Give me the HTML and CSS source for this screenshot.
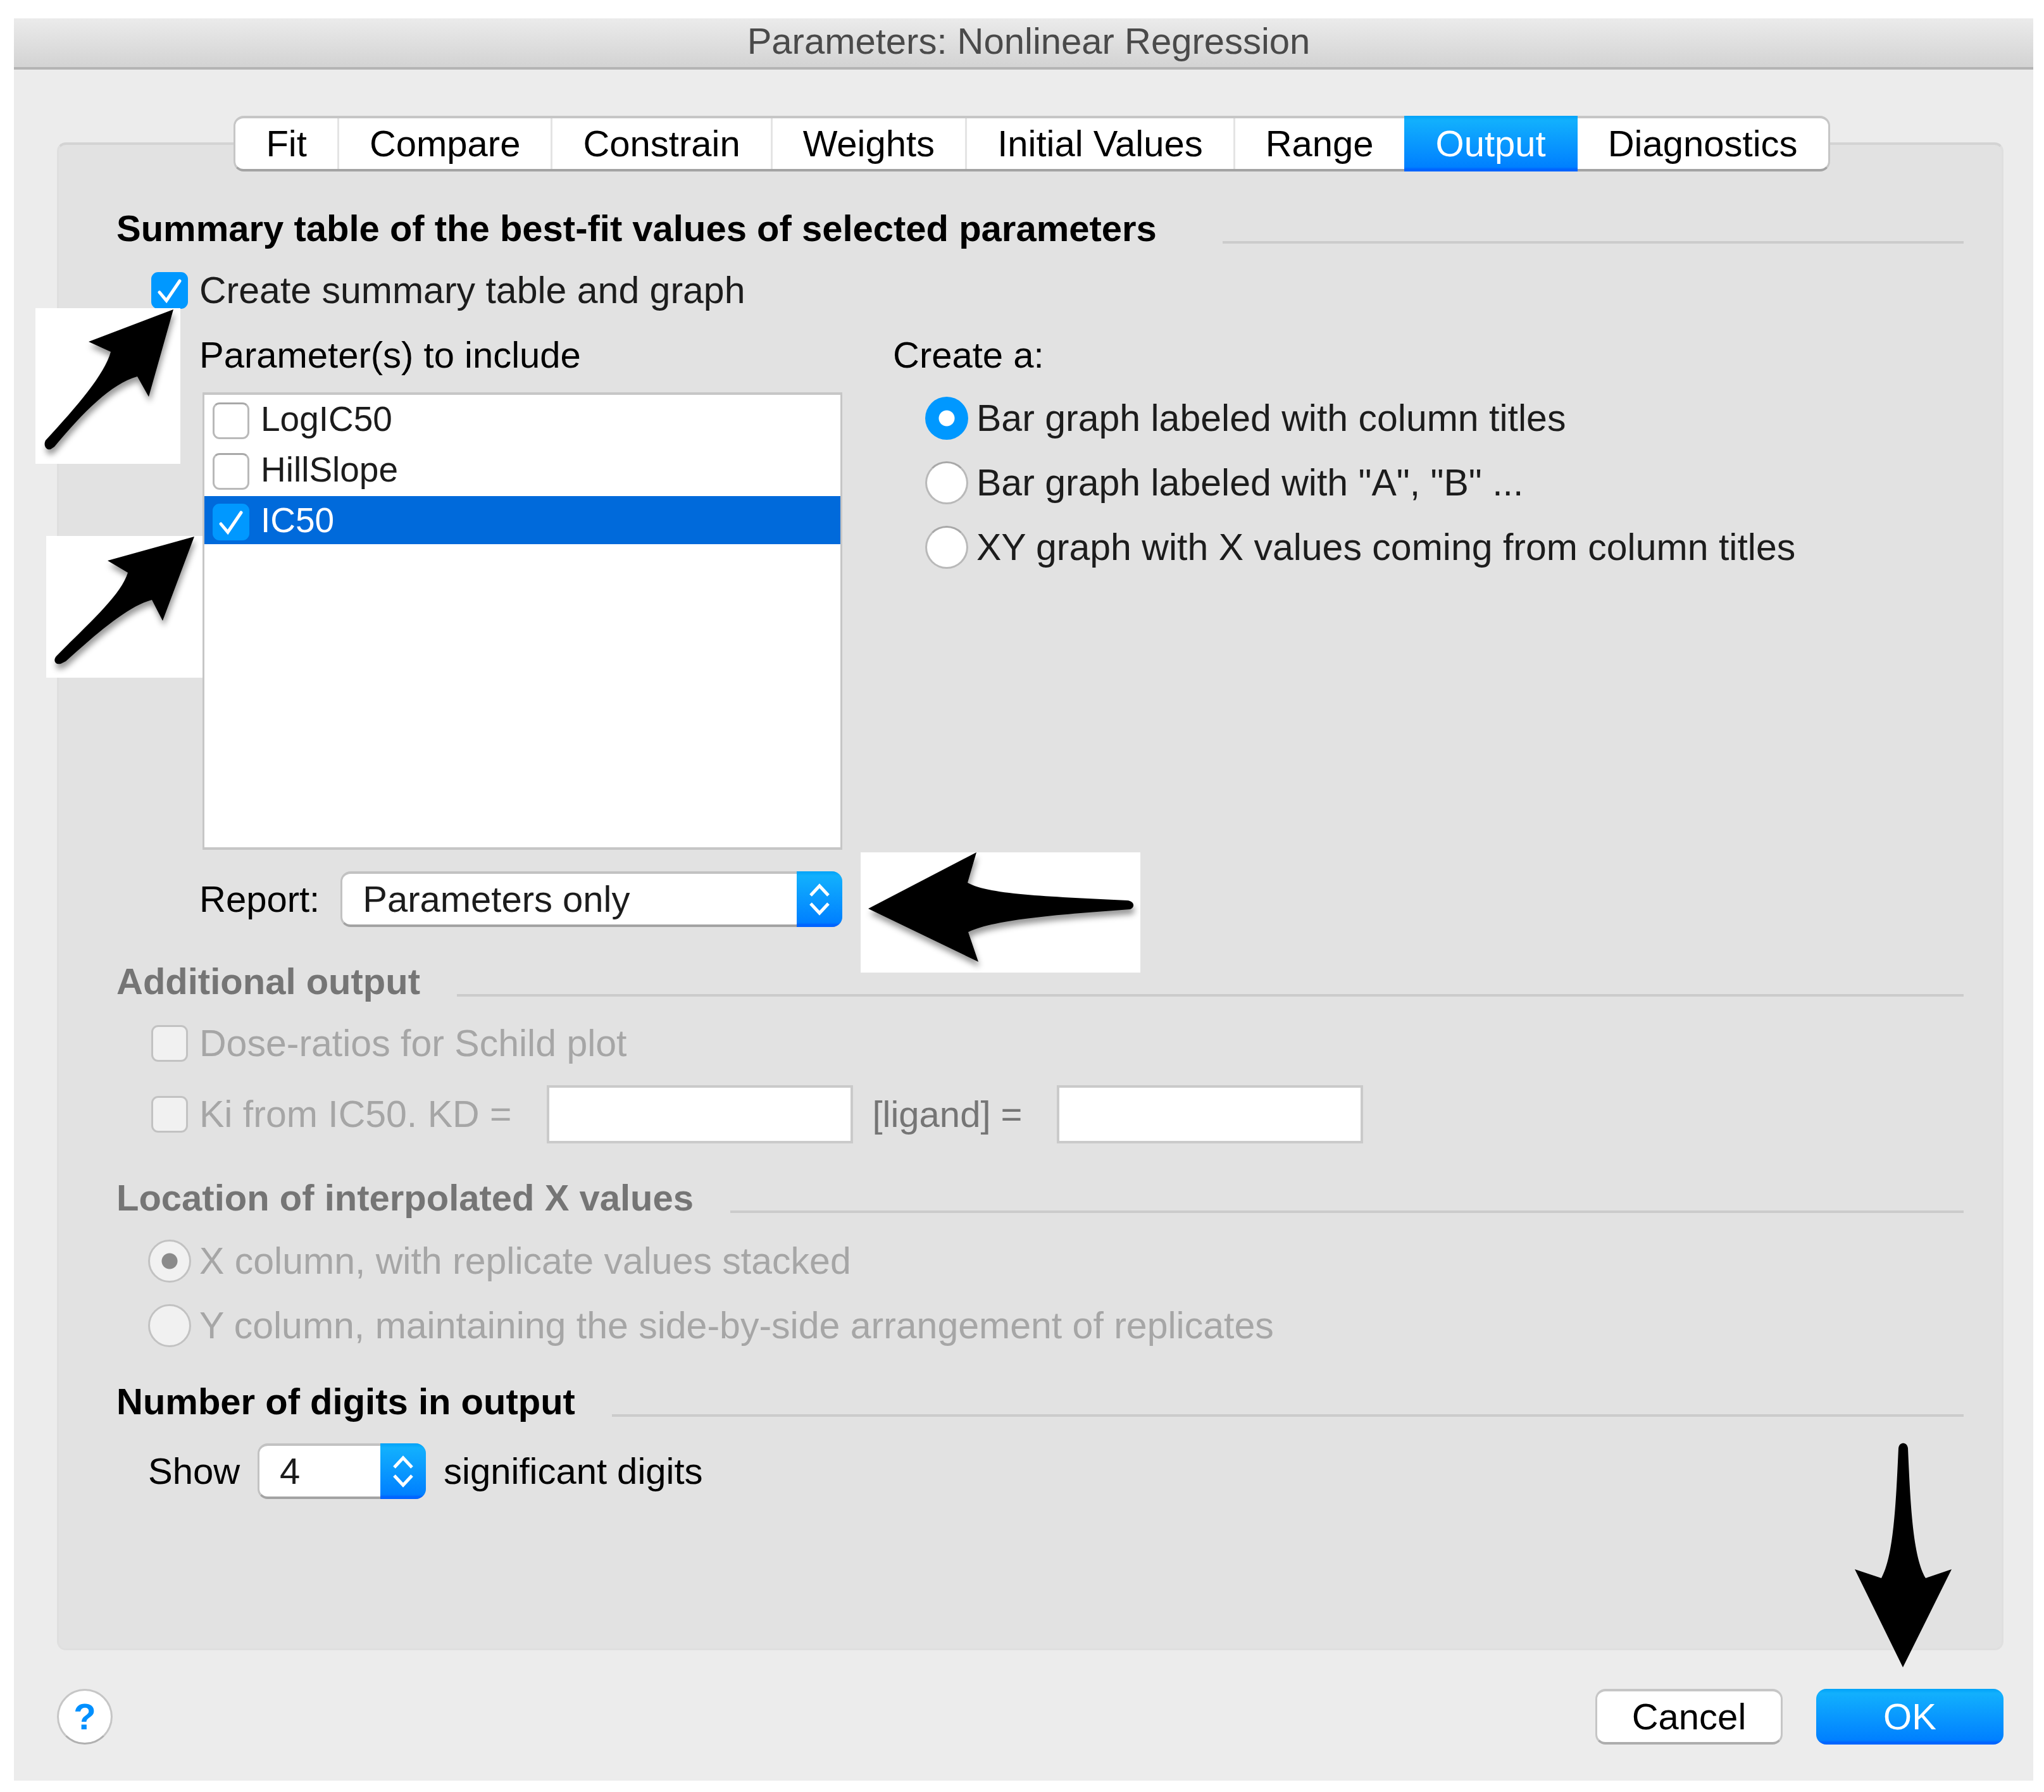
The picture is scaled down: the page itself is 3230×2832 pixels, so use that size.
FILE: index.html
```
<!DOCTYPE html>
<html lang="en">
<head>
<meta charset="UTF-8">
<meta name="viewport" content="width=device-width, initial-scale=1.0">
<title>Parameters: Nonlinear Regression</title>
<link rel="stylesheet" href="styles.css">
</head>
<body>
  <div class="dialog">
    <h1 class="titlebar">Parameters: Nonlinear Regression</h1>
    <form class="content">
      <div class="panel">
        <div class="tabs">
          <button type="button" class="tab">Fit</button>
          <button type="button" class="tab">Compare</button>
          <button type="button" class="tab">Constrain</button>
          <button type="button" class="tab">Weights</button>
          <button type="button" class="tab">Initial Values</button>
          <button type="button" class="tab">Range</button>
          <button type="button" class="tab active">Output</button>
          <button type="button" class="tab">Diagnostics</button>
        </div>

        <section class="group">
          <h2 class="group-title wide">Summary table of the best-fit values of selected parameters</h2>
          <label class="option">
            <span class="box"><input type="checkbox" name="summary" checked><svg class="tick" viewBox="0 0 58 58"><polyline points="13,32 24,45 45,14"/></svg></span>
            Create summary table and graph
          </label>
          <div class="columns">
            <div class="params">
              <div class="caption">Parameter(s) to include</div>
              <div class="list">
                <label class="option"><span class="box"><input type="checkbox" name="logic50"></span>LogIC50</label>
                <label class="option"><span class="box"><input type="checkbox" name="hillslope"></span>HillSlope</label>
                <label class="option selected"><span class="box"><input type="checkbox" name="ic50" checked><svg class="tick" viewBox="0 0 58 58"><polyline points="13,32 24,45 45,14"/></svg></span>IC50</label>
              </div>
              <div class="report">
                <label for="report">Report:</label>
                <span class="select">
                  <select id="report" name="report"><option>Parameters only</option></select>
                  <svg class="stepper" viewBox="0 0 72 88"><path d="M22 38 L36 23 L50 38 M22 51 L36 66 L50 51"/></svg>
                </span>
              </div>
              <svg class="note note-summary" viewBox="0 0 229 246"><path d="M218 2 L84 53 L119 69 C109 105 66 155 16 209 C12 217 17 225 24 223 L30 219 C75 165 120 119 161 108 L179 140 Z"/></svg>
              <svg class="note note-ic50" viewBox="0 0 247 224"><path d="M234 1 L97 39 L129 58 C118 94 68 137 16 190 C10 197 15 204 23 202 L31 198 C80 154 129 111 167 101 L184 134 Z"/></svg>
              <svg class="note note-report" viewBox="0 0 442 190"><path d="M12 89 L183 0 L169 48 C204 68 310 70 421 76 C433 77 434 87 426 90 C320 98 214 105 170 126 L186 173 Z"/></svg>
            </div>
            <div class="graphs">
              <div class="caption">Create a:</div>
              <label class="option"><span class="box"><input type="radio" name="graph" checked></span>Bar graph labeled with column titles</label>
              <label class="option"><span class="box"><input type="radio" name="graph"></span>Bar graph labeled with "A", "B" ...</label>
              <label class="option"><span class="box"><input type="radio" name="graph"></span>XY graph with X values coming from column titles</label>
            </div>
          </div>
        </section>

        <section class="group disabled">
          <h2 class="group-title">Additional output</h2>
          <label class="option"><span class="box"><input type="checkbox" name="schild" disabled></span>Dose-ratios for Schild plot</label>
          <div class="ki-row">
            <label class="option"><span class="box"><input type="checkbox" name="ki" disabled></span>Ki from IC50. KD =</label>
            <input type="text" class="field" name="kd" aria-label="KD" disabled>
            <label class="ligand" for="ligand">[ligand] =</label>
            <input type="text" class="field" id="ligand" name="ligand" disabled>
          </div>
        </section>

        <section class="group disabled">
          <h2 class="group-title">Location of interpolated X values</h2>
          <label class="option"><span class="box"><input type="radio" name="location" checked disabled></span>X column, with replicate values stacked</label>
          <label class="option"><span class="box"><input type="radio" name="location" disabled></span>Y column, maintaining the side-by-side arrangement of replicates</label>
        </section>

        <section class="group">
          <h2 class="group-title">Number of digits in output</h2>
          <div class="digits">
            <label for="digits">Show</label>
            <span class="select small">
              <select id="digits" name="digits"><option>4</option></select>
              <svg class="stepper" viewBox="0 0 72 88"><path d="M22 38 L36 23 L50 38 M22 51 L36 66 L50 51"/></svg>
            </span>
            <span>significant digits</span>
          </div>
        </section>
      </div>

      <div class="footer">
        <button type="button" class="help">?</button>
        <button type="button" class="btn">Cancel</button>
        <div class="ok">
          <button type="submit" class="btn primary">OK</button>
          <svg class="note-ok" viewBox="0 0 154 356"><path d="M69 9 C70 -2 83 -2 84 9 C88 100 92 180 112 214 L153 200 L76 355 L0 200 L42 214 C61 180 65 100 69 9 Z"/></svg>
        </div>
      </div>
    </form>
  </div>
</body>
</html>
```
FILE: styles.css
```
* {
  box-sizing: border-box;
}
body {
  margin: 0;
  padding: 29px 17px 17px 22px;
  background-color: #fff;
  color: #000;
  font-family: "Liberation Sans", Arial, sans-serif;
  font-size: 58px;
  line-height: 64px;
}
h1, h2 {
  margin: 0;
  font-size: 58px;
}
button, input, select {
  margin: 0;
  font: inherit;
  color: inherit;
}
.dialog {
  background-color: #ececec;
}
.titlebar {
  padding: 4px 0 9px 16px;
  border-bottom: 4px solid #b4b4b4;
  background: linear-gradient(#ebebeb, #d3d3d3);
  color: #4a4a4a;
  font-weight: normal;
  text-align: center;
}
.content {
  padding: 115px 47px 57px 68px;
}
.panel {
  display: flex;
  flex-direction: column;
  gap: 54px;
  padding: 0 60px 236px 91px;
  border: 3px solid #dfdfdf;
  border-top: 4px solid #d3d3d3;
  border-radius: 14px;
  background-color: #e2e2e2;
}

/* tabs */
.tabs {
  display: flex;
  align-self: center;
  margin: -46px 26px 4px 0;
  border: 3px solid #c6c6c6;
  border-top-width: 4px;
  border-bottom: 4px solid #a3a3a3;
  border-radius: 16px;
  background-color: #fff;
}
.tab {
  height: 80px;
  padding: 0 48px;
  border: none;
  border-right: 3px solid #e4e4e4;
  background: none;
}
.tab:last-child {
  border-right: none;
}
.tab.active {
  height: 88px;
  margin: -4px 0 -4px -3px;
  padding: 0 50px;
  border: none;
  background: linear-gradient(#00a2f8, #12b0fd 8%, #0080ff 92%, #0064ff 96%);
  color: #fff;
}

/* groups */
.group {
  display: flex;
  flex-direction: column;
  gap: 34px;
}
.group > :not(.group-title) {
  margin-left: 50px;
}
.group-title {
  display: flex;
  align-items: flex-end;
  gap: 58px;
  font-weight: bold;
}
.group-title.wide {
  gap: 104px;
}
.group-title::after {
  content: "";
  flex: 1;
  height: 4px;
  margin-bottom: 8px;
  background-color: #cbcbcb;
}
.disabled .group-title,
.ligand {
  color: #757575;
}
.disabled .option {
  color: #a6a6a6;
}

/* check boxes and radio buttons */
.option {
  display: flex;
  align-items: center;
  gap: 13px;
  color: #1c1c1c;
  font-size: 59px;
}
.box {
  position: relative;
  display: flex;
  justify-content: center;
  width: 68px;
}
input[type="checkbox"],
input[type="radio"] {
  appearance: none;
  width: 58px;
  height: 58px;
  border: 3px solid #b9b9b9;
  border-top-color: #a8a8a8;
  border-radius: 11px;
  background-color: #fff;
}
input[type="radio"] {
  width: 68px;
  height: 68px;
  border-radius: 50%;
}
input[type="checkbox"]:checked {
  border-color: #0098ff;
  background-color: #0098ff;
}
input[type="radio"]:checked {
  border: none;
  background: radial-gradient(circle, #fff 12px, #0098ff 13px);
}
input[type="checkbox"]:disabled,
input[type="radio"]:disabled {
  border: 3px solid #c2c2c2;
  background-color: #f1f1f1;
}
input[type="radio"]:checked:disabled {
  background: radial-gradient(circle, #8a8a8a 12px, #f1f1f1 13px);
}
.tick {
  position: absolute;
  top: 0;
  left: 5px;
  width: 58px;
  height: 58px;
  fill: none;
  stroke: #fff;
  stroke-width: 5;
  stroke-linecap: round;
  pointer-events: none;
}

/* summary table */
.columns {
  display: flex;
  gap: 80px;
  padding: 4px 0 0 81px;
}
.params {
  position: relative;
  width: 1016px;
}
.list {
  display: flex;
  flex-direction: column;
  gap: 4px;
  height: 723px;
  margin: 27px 0 34px 5px;
  border: 3px solid #c6c6c6;
  border-width: 4px 3px;
  background-color: #fff;
}
.list .option {
  height: 76px;
  padding-left: 8px;
  font-size: 55px;
}
.list .box {
  margin-top: 6px;
}
.list .selected {
  background-color: #006adb;
  color: #fff;
}
.report,
.digits {
  display: flex;
  align-items: center;
  gap: 33px;
}
.digits {
  gap: 28px;
}
.graphs {
  display: flex;
  flex-direction: column;
  gap: 34px;
}
.graphs .option {
  margin-left: 51px;
}
.select {
  position: relative;
  flex: 1;
  height: 88px;
}
.select.small {
  flex: none;
  width: 266px;
}
.select select {
  appearance: none;
  width: 100%;
  height: 88px;
  padding: 0 80px 0 32px;
  border: 3px solid #c2c2c2;
  border-top-width: 4px;
  border-bottom: 4px solid #a3a3a3;
  border-radius: 16px;
  background-color: #fff;
  color: #1c1c1c;
}
.stepper {
  position: absolute;
  top: 0;
  right: 0;
  width: 72px;
  height: 88px;
  border-radius: 0 16px 16px 0;
  background: linear-gradient(#00a2f8, #12b0fd 8%, #0080ff 92%, #0064ff 96%);
  fill: none;
  stroke: #fff;
  stroke-width: 5;
  pointer-events: none;
}

/* additional output */
.ki-row {
  display: flex;
  align-items: center;
}
.field {
  width: 484px;
  height: 92px;
  border: 4px solid #cacaca;
  background-color: #fff;
}
.ki-row .option {
  margin-right: 56px;
}
.ligand {
  margin: 0 55px 0 30px;
}

/* footer */
.footer {
  display: flex;
  gap: 53px;
  margin-top: 61px;
}
.help {
  width: 88px;
  height: 88px;
  margin-right: auto;
  padding: 0;
  border: 3px solid #c6c6c6;
  border-bottom-color: #b0b0b0;
  border-radius: 50%;
  background-color: #fff;
  color: #0090ff;
  font-weight: bold;
}
.btn {
  width: 296px;
  height: 88px;
  padding: 0;
  border: 3px solid #c6c6c6;
  border-top-width: 4px;
  border-bottom: 4px solid #adadad;
  border-radius: 16px;
  background-color: #fff;
}
.btn.primary {
  border: none;
  background: linear-gradient(#00a2f8, #12b0fd 8%, #0080ff 92%, #0064ff 96%);
  color: #fff;
}
.ok {
  position: relative;
}

/* arrows drawn over the dialog */
.note {
  position: absolute;
  background-color: #fff;
}
.note path {
  filter: drop-shadow(2px 8px 5px rgba(0,0,0,0.4));
}
.note-summary {
  top: -42px;
  left: -259px;
  width: 229px;
  height: 246px;
}
.note-ic50 {
  top: 318px;
  left: -242px;
  width: 247px;
  height: 224px;
}
.note-report {
  top: 818px;
  left: 1045px;
  width: 442px;
  height: 190px;
}
.note-ok {
  position: absolute;
  right: 81px;
  bottom: 121px;
  width: 154px;
  height: 356px;
}
```
